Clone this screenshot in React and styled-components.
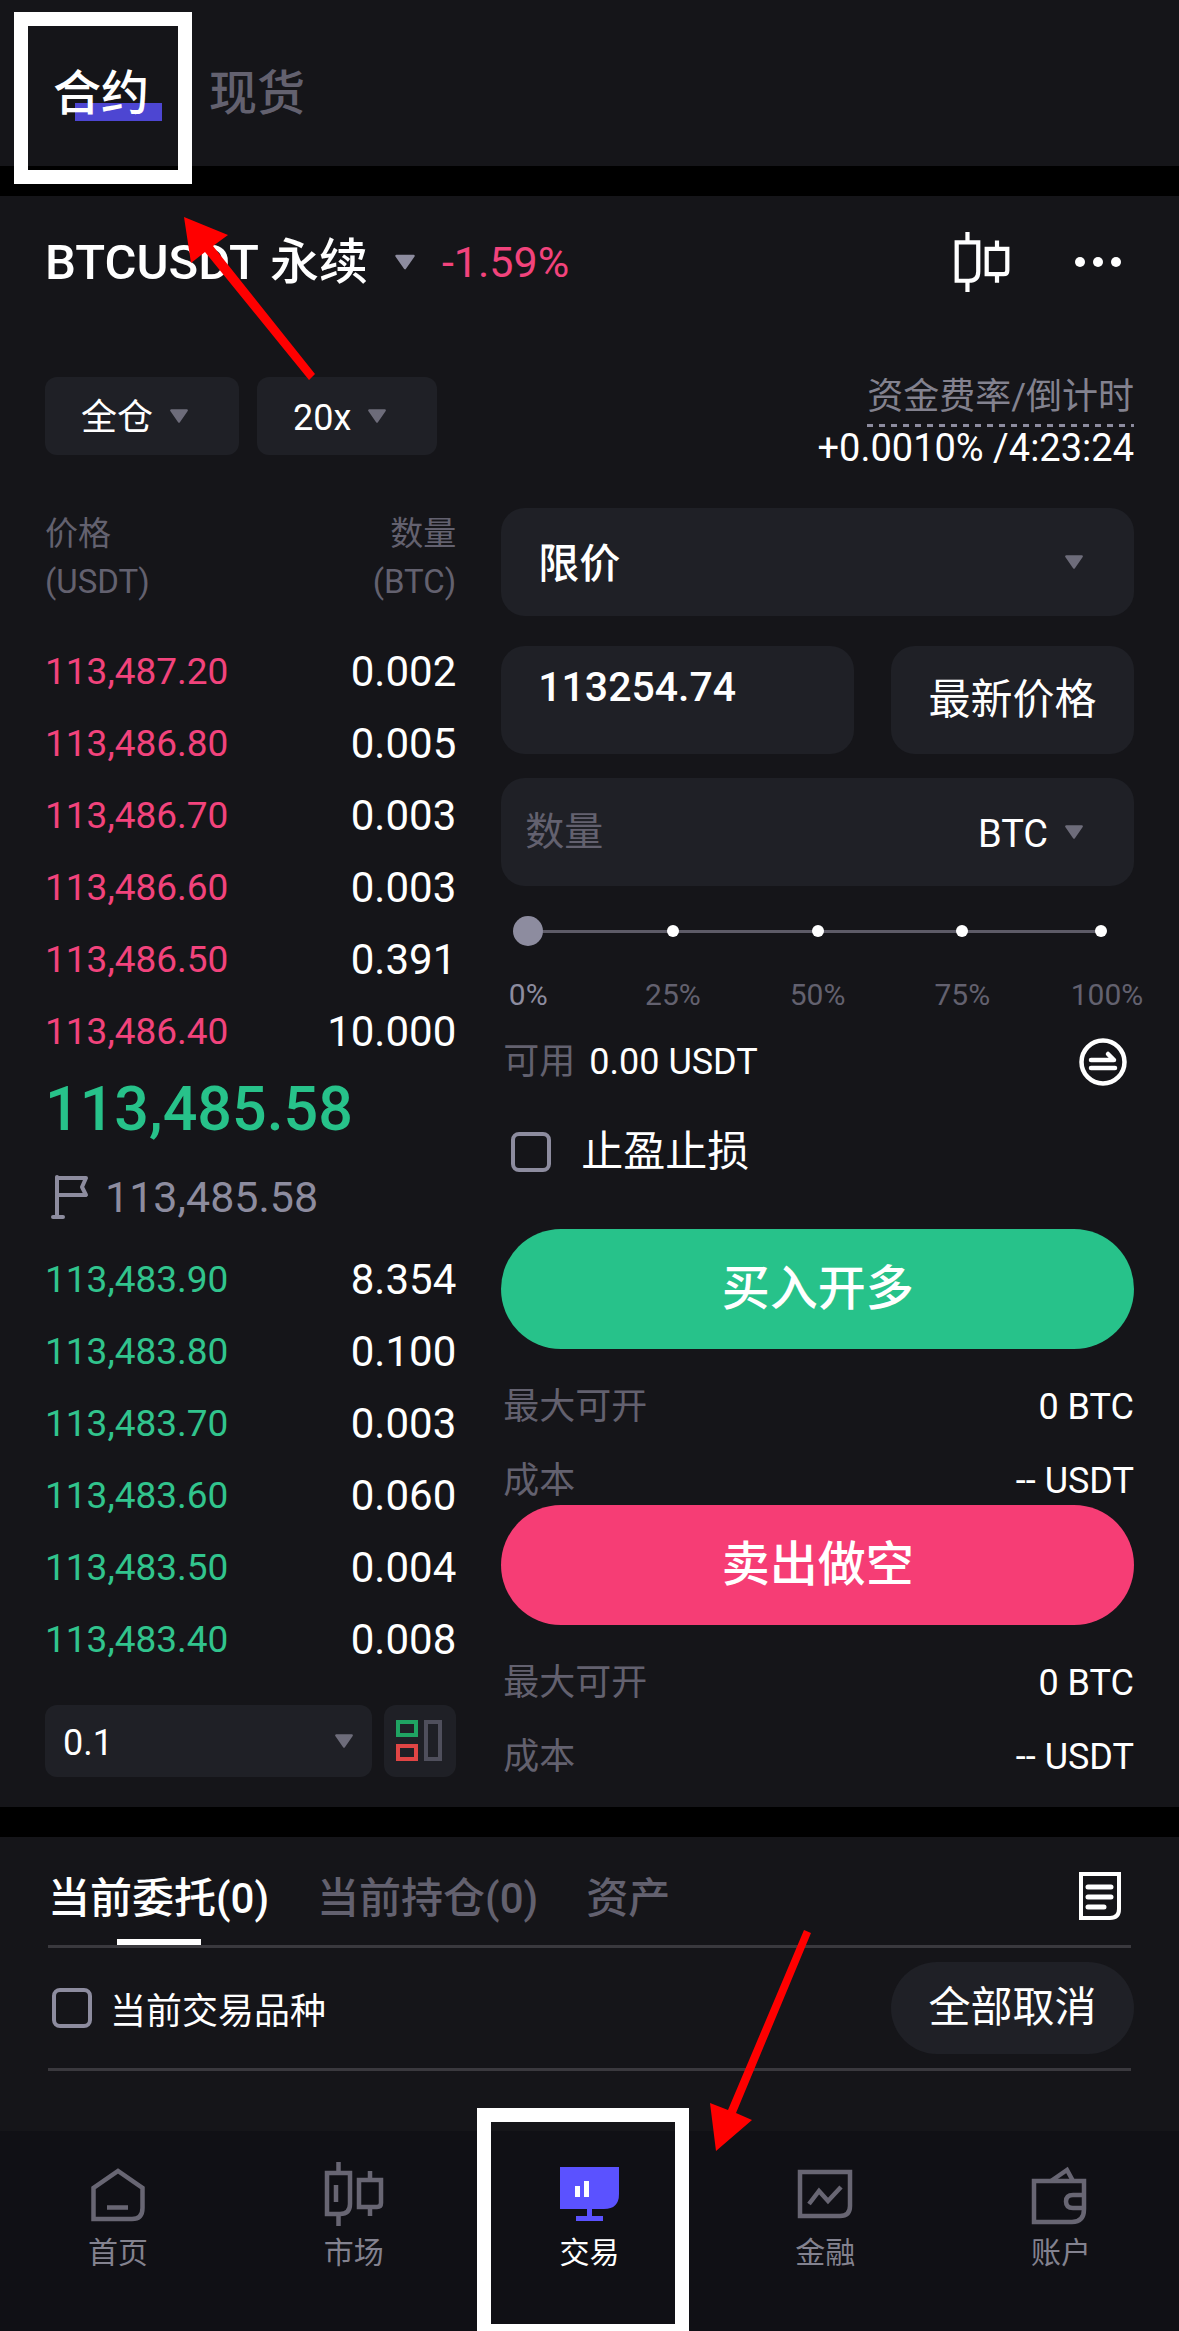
import { useState } from "react";
import styled, { createGlobalStyle } from "styled-components";

const asks = [
    ["113,487.20", "0.002"],
    ["113,486.80", "0.005"],
    ["113,486.70", "0.003"],
    ["113,486.60", "0.003"],
    ["113,486.50", "0.391"],
    ["113,486.40", "10.000"],
];

const bids = [
    ["113,483.90", "8.354"],
    ["113,483.80", "0.100"],
    ["113,483.70", "0.003"],
    ["113,483.60", "0.060"],
    ["113,483.50", "0.004"],
    ["113,483.40", "0.008"],
];

const marks = ["0%", "25%", "50%", "75%", "100%"];

const navItems = [
    { label: "首页", Icon: HomeIcon },
    { label: "市场", Icon: MarketIcon },
    { label: "交易", Icon: TradeIcon, active: true },
    { label: "金融", Icon: FinanceIcon },
    { label: "账户", Icon: WalletIcon },
];

export default function App() {
    const [price, setPrice] = useState("113254.74");
    const [amount, setAmount] = useState("");
    const [percent, setPercent] = useState(0);

    return (
        <Page>
            <GlobalStyle />

            <TopTabs>
                <TopTab type="button" $active><span>合约</span></TopTab>
                <TopTab type="button"><span>现货</span></TopTab>
            </TopTabs>

            <Trade>
                <PairRow>
                    <Pair type="button">
                        BTCUSDT 永续
                        <Caret $size={22} $color="#8d8c9f" />
                    </Pair>
                    <Change>-1.59%</Change>
                    <PairActions>
                        <IconButton type="button" aria-label="K线"><Candles size={60} /></IconButton>
                        <IconButton type="button" aria-label="更多">
                            <svg width="48" height="48" viewBox="0 0 48 48" fill="#fff">
                                <circle cx="6" cy="24" r="5" />
                                <circle cx="24" cy="24" r="5" />
                                <circle cx="42" cy="24" r="5" />
                            </svg>
                        </IconButton>
                    </PairActions>
                </PairRow>

                <SettingsRow>
                    <Dropdown label="保证金模式" value="全仓" />
                    <Dropdown label="杠杆" value="20x" />
                    <Funding>
                        <FundingLabel>资金费率/倒计时</FundingLabel>
                        <FundingValue>+0.0010% /4:23:24</FundingValue>
                    </Funding>
                </SettingsRow>

                <Columns>
                    <Book>
                        <BookTable>
                            <thead>
                                <tr>
                                    <th>价格<br />(USDT)</th>
                                    <th>数量<br />(BTC)</th>
                                </tr>
                            </thead>
                            <BookRows rows={asks} color="#f2437c" />
                        </BookTable>
                        <LastPrice>113,485.58</LastPrice>
                        <MarkPrice>
                            <FlagIcon />
                            113,485.58
                        </MarkPrice>
                        <BookTable>
                            <BookRows rows={bids} color="#31c48d" />
                        </BookTable>
                        <BookFooter>
                            <StepBox>
                                <Select aria-label="价格精度"><option>0.1</option></Select>
                                <Caret $size={20} $color="#6d6c7a" />
                            </StepBox>
                            <DepthButton type="button" aria-label="盘口布局"><DepthIcon /></DepthButton>
                        </BookFooter>
                    </Book>

                    <Form>
                        <FieldBox>
                            <Select aria-label="委托类型" $size={41} $weight={500}><option>限价</option></Select>
                            <Caret $size={20} $color="#6d6c7a" />
                        </FieldBox>
                        <PriceRow>
                            <PriceInput aria-label="价格" value={price} onChange={(e) => setPrice(e.target.value)} />
                            <LatestButton type="button">最新价格</LatestButton>
                        </PriceRow>
                        <AmountBox>
                            <AmountInput aria-label="数量" placeholder="数量" value={amount} onChange={(e) => setAmount(e.target.value)} />
                            <UnitSelect aria-label="单位"><option>BTC</option></UnitSelect>
                            <Caret $size={20} $color="#6d6c7a" />
                        </AmountBox>

                        <SliderBox>
                            <Slider
                                type="range"
                                aria-label="仓位比例"
                                min="0"
                                max="100"
                                value={percent}
                                onChange={(e) => setPercent(Number(e.target.value))}
                            />
                            <Ticks>
                                {marks.slice(1).map((mark) => <Tick key={mark} />)}
                            </Ticks>
                        </SliderBox>
                        <Marks>
                            {marks.map((mark, i) => <Mark key={mark} $active={i === 0}>{mark}</Mark>)}
                        </Marks>

                        <Available>
                            <Muted>可用</Muted>
                            <span>0.00 USDT</span>
                            <IconButton type="button" aria-label="划转"><TransferIcon /></IconButton>
                        </Available>

                        <StopRow>
                            <Checkbox type="checkbox" />
                            止盈止损
                        </StopRow>

                        <OrderButton type="button" $color="#27c28a">买入开多</OrderButton>
                        <OrderInfo />
                        <OrderButton type="button" $color="#f63d75">卖出做空</OrderButton>
                        <OrderInfo />
                    </Form>
                </Columns>
            </Trade>

            <Orders>
                <OrderTabs>
                    <OrderTab type="button" $active>当前委托(0)</OrderTab>
                    <OrderTab type="button">当前持仓(0)</OrderTab>
                    <OrderTab type="button">资产</OrderTab>
                    <HistoryButton type="button" aria-label="历史委托"><NoteIcon /></HistoryButton>
                </OrderTabs>
                <FilterRow>
                    <FilterLabel>
                        <Checkbox type="checkbox" />
                        当前交易品种
                    </FilterLabel>
                    <CancelAll type="button">全部取消</CancelAll>
                </FilterRow>
            </Orders>

            <Nav>
                {navItems.map(({ label, Icon, active }) => (
                    <NavItem key={label} href="#" $active={active}>
                        <Icon />
                        {label}
                        {active && <NavFrame />}
                    </NavItem>
                ))}
            </Nav>

            <TabFrame />
            <UpArrow width="140" height="170" viewBox="0 0 140 170">
                <path d="M4 4L48 22L33 33L135 161L129 167L25 39L11 50Z" fill="#f00" />
            </UpArrow>
            <DownArrow width="112" height="226" viewBox="0 0 112 226">
                <path d="M100 1L107 4L32 184L48 191L12 222L6 174L24 181Z" fill="#f00" />
            </DownArrow>
        </Page>
    )
}

function Dropdown({ label, value }) {
    return (
        <DropdownBox>
            <Select aria-label={label}><option>{value}</option></Select>
            <Caret $size={20} $color="#6d6c7a" />
        </DropdownBox>
    )
}

function BookRows({ rows, color }) {
    return (
        <tbody>
            {rows.map(([price, size]) => (
                <tr key={price}>
                    <PriceCell $color={color}>{price}</PriceCell>
                    <SizeCell>{size}</SizeCell>
                </tr>
            ))}
        </tbody>
    )
}

function OrderInfo() {
    return (
        <InfoList>
            <InfoRow><Muted>最大可开</Muted><span>0 BTC</span></InfoRow>
            <InfoRow><Muted>成本</Muted><span>-- USDT</span></InfoRow>
        </InfoList>
    )
}

function Caret({ $size, $color }) {
    return (
        <CaretSvg width={$size} height={$size} viewBox="0 0 18 18">
            <path d="M2 4H16L9 14Z" fill={$color} stroke={$color} strokeWidth="2" strokeLinejoin="round" />
        </CaretSvg>
    )
}

function Candles({ size, color = "#fff", inner }) {
    return (
        <svg width={size} height={size} viewBox="0 0 64 64" fill="none" stroke={color} strokeWidth="4.500">
            <path d="M5 11H28V42Q28 52 18 52H5Z" />
            <path d="M16.500 0V10M16.500 52V64" />
            <path d="M37 18H59V41Q59 45 55 45H37Z" />
            <path d="M48 9V17M48 46V54" />
            {inner && <path d="M14 23V40" />}
        </svg>
    )
}

function MarketIcon() {
    return <Candles size={64} color="#686673" inner />
}

function HomeIcon() {
    return (
        <svg width="64" height="64" viewBox="0 0 64 64" fill="none" stroke="#686673" strokeWidth="4.500">
            <path d="M7.500 57V26L32 9L56.500 26V46Q56.500 57 46 57Z" />
            <path d="M21 45.500H42" />
        </svg>
    )
}

function TradeIcon() {
    return (
        <svg width="64" height="64" viewBox="0 0 64 64" fill="#5b52ff">
            <path d="M3 5H62V32Q62 47 47 47H3Z" />
            <path d="M30 46H35V54H46V59H19V54H30Z" />
            <path d="M18 24H23V35H18ZM27 19H32V35H27Z" fill="#fff" />
        </svg>
    )
}

function FinanceIcon() {
    return (
        <svg width="64" height="64" viewBox="0 0 64 64" fill="none" stroke="#686673" strokeWidth="4.500">
            <path d="M7 10H57V44Q57 54 47 54H7Z" />
            <path d="M16 42L26 29L35 39L48 25" />
        </svg>
    )
}

function WalletIcon() {
    return (
        <svg width="64" height="64" viewBox="0 0 64 64" fill="none" stroke="#686673" strokeWidth="4.500">
            <path d="M5 19H55V47Q55 60 43 60H5Z" />
            <path d="M22 19L38 8L44 19" />
            <path d="M55 33H44Q37 33 37 39.500Q37 46 44 46H55" />
        </svg>
    )
}

function FlagIcon() {
    return (
        <svg width="40" height="48" viewBox="0 0 40 48" fill="none" stroke="#8d8c9f" strokeWidth="4" strokeLinecap="round" strokeLinejoin="round">
            <path d="M8 4V44M4 44H14" />
            <path d="M8 5H37L33 14L37 22H8" />
        </svg>
    )
}

function TransferIcon() {
    return (
        <svg width="48" height="48" viewBox="0 0 48 48" fill="none" stroke="#fff" strokeWidth="4.500" strokeLinecap="round" strokeLinejoin="round">
            <circle cx="24" cy="24" r="21.500" />
            <path d="M12 22H35L29 16" />
            <path d="M12 30H36" />
        </svg>
    )
}

function NoteIcon() {
    return (
        <svg width="42" height="48" viewBox="0 0 42 48" fill="none" stroke="#fff" strokeWidth="4">
            <path d="M2 2H40V37Q40 46 31 46H2Z" />
            <path d="M9 15H32M9 25H32M9 35H25" strokeWidth="5" strokeLinecap="round" />
        </svg>
    )
}

function DepthIcon() {
    return (
        <svg width="48" height="48" viewBox="0 0 48 48" fill="none" strokeWidth="4">
            <rect x="2" y="5" width="18" height="13" stroke="#1fa362" />
            <rect x="2" y="29" width="18" height="13" stroke="#e04545" />
            <rect x="30" y="5" width="14" height="37" stroke="#4f4f5c" />
        </svg>
    )
}

const GlobalStyle = createGlobalStyle`
    * {
        box-sizing: border-box;
    }

    body {
        margin: 0;
        background: #000;
    }

    body, button, input, select {
        font-family: Roboto, "Noto Sans CJK SC", sans-serif;
    }

    button, input, select {
        margin: 0;
        padding: 0;
        border: 0;
        outline: 0;
        background: none;
        color: inherit;
        font-size: inherit;
    }

    button {
        line-height: 1;
    }
`

const Page = styled.div`
    position: relative;
    display: flex;
    flex-direction: column;
    overflow: hidden;
    color: #fff;
    font-size: 36px;
`

const TopTabs = styled.div`
    display: flex;
    gap: 60px;
    padding: 58px 53px 36px;
    background: #151519;
`

const TopTab = styled.button`
    position: relative;
    color: ${(props) => (props.$active ? '#fff' : '#63616f')};
    font-size: 48px;
    font-weight: 500;
    line-height: 72px;

    span {
        position: relative;
    }

    &::before {
        content: "";
        display: ${(props) => (props.$active ? 'block' : 'none')};
        position: absolute;
        left: 22px;
        right: -13px;
        bottom: 9px;
        height: 18px;
        background: #4d46d2;
    }
`

const Trade = styled.main`
    margin-top: 30px;
    padding: 30px 45px 26px;
    background: #151519;
`

const PairRow = styled.div`
    display: flex;
    align-items: center;
    height: 72px;
`

const Pair = styled.button`
    display: flex;
    align-items: center;
    gap: 26px;
    font-size: 49px;
    font-weight: 500;
`

const Change = styled.span`
    margin-left: 26px;
    color: #f2437c;
    font-size: 43px;
`

const PairActions = styled.div`
    display: flex;
    align-items: center;
    gap: 62px;
    margin-left: auto;
    padding-right: 12px;
`

const IconButton = styled.button`
    display: flex;
    align-items: center;
`

const CaretSvg = styled.svg`
    flex: none;
    pointer-events: none;
`

const SettingsRow = styled.div`
    display: flex;
    align-items: center;
    gap: 18px;
    margin-top: 64px;
`

const DropdownBox = styled.div`
    display: flex;
    align-items: center;
    gap: 15px;
    height: 78px;
    padding: 0 50px 0 36px;
    border-radius: 12px;
    background: #1f2026;
`

const Select = styled.select`
    flex: 1;
    padding-top: 3px;
    appearance: none;
    font-size: ${(props) => props.$size || 36}px;
    font-weight: ${(props) => props.$weight || 400};
`

const Funding = styled.div`
    display: flex;
    flex-direction: column;
    align-items: flex-end;
    margin-left: auto;
    padding-top: 6px;
`

const FundingLabel = styled.span`
    padding-bottom: 1px;
    background: repeating-linear-gradient(90deg, #8d8c9f 0 6px, transparent 6px 12px) bottom / 100% 3px no-repeat;
    color: #83828f;
    line-height: 58px;
`

const FundingValue = styled.span`
    font-size: 38px;
    line-height: 43px;
`

const Columns = styled.div`
    display: grid;
    grid-template-columns: minmax(0, 13fr) minmax(0, 20fr);
    gap: 45px;
    margin-top: 38px;
`

const Book = styled.div`
    padding-top: 2px;
`

const BookTable = styled.table`
    width: 100%;
    border-collapse: collapse;

    th {
        padding: 0 0 30px;
        color: #63616f;
        font-size: 33px;
        font-weight: 400;
        line-height: 48px;
        text-align: left;
    }

    th:last-child {
        text-align: right;
    }
`

const PriceCell = styled.td`
    padding: 0;
    color: ${(props) => props.$color};
    font-size: 37px;
    line-height: 72px;
`

const SizeCell = styled.td`
    padding: 0;
    font-size: 42px;
    line-height: 72px;
    text-align: right;
`

const LastPrice = styled.div`
    color: #27c28a;
    font-size: 61px;
    font-weight: 500;
    line-height: 82px;
`

const MarkPrice = styled.div`
    display: flex;
    align-items: center;
    gap: 16px;
    height: 94px;
    padding-left: 4px;
    color: #8d8c9f;
    font-size: 43px;
`

const BookFooter = styled.div`
    display: flex;
    gap: 12px;
    margin-top: 29px;
`

const StepBox = styled.div`
    display: flex;
    flex: 1;
    align-items: center;
    height: 72px;
    padding: 0 18px;
    border-radius: 12px;
    background: #1f2026;
`

const DepthButton = styled.button`
    display: flex;
    align-items: center;
    justify-content: center;
    width: 72px;
    border-radius: 12px;
    background: #1f2026;
`

const Form = styled.form`
    display: flex;
    flex-direction: column;
`

const FieldBox = styled.div`
    display: flex;
    align-items: center;
    height: 108px;
    padding: 0 50px 0 37px;
    border-radius: 24px;
    background: #1f2026;
`

const PriceRow = styled.div`
    display: grid;
    grid-template-columns: minmax(0, 1fr) 243px;
    gap: 37px;
    margin-top: 30px;
`

const PriceInput = styled.input`
    min-width: 0;
    height: 108px;
    padding: 0 24px 26px 37px;
    border-radius: 24px;
    background: #1f2026;
    font-size: 41px;
    font-weight: 500;
`

const LatestButton = styled.button`
    border-radius: 24px;
    background: #1f2026;
    font-size: 42px;
`

const AmountBox = styled(FieldBox)`
    gap: 15px;
    margin-top: 24px;
    padding-left: 24px;
`

const AmountInput = styled.input`
    flex: 1;
    min-width: 0;
    font-size: 39px;

    &::placeholder {
        color: #63616f;
    }
`

const UnitSelect = styled(Select)`
    flex: none;
    font-size: 38px;
`

const SliderBox = styled.div`
    position: relative;
    height: 42px;
    margin: 24px 27px 0 12px;
`

const Slider = styled.input`
    display: block;
    width: 100%;
    height: 42px;
    appearance: none;
    background: linear-gradient(#5d5b67, #5d5b67) center / calc(100% - 12px) 3px no-repeat;

    &::-webkit-slider-thumb {
        width: 30px;
        height: 30px;
        appearance: none;
        border-radius: 50%;
        background: #8d8c9f;
    }
`

const Ticks = styled.div`
    position: absolute;
    inset: 0 0 0 15px;
    display: grid;
    grid-template-columns: repeat(4, 1fr);
    align-items: center;
    pointer-events: none;
`

const Tick = styled.span`
    justify-self: end;
    width: 12px;
    height: 12px;
    margin-right: -6px;
    border-radius: 50%;
    background: #fff;

    &:last-child {
        margin-right: 0;
    }
`

const Marks = styled.div`
    display: flex;
    justify-content: space-between;
    margin: 21px -13px 0;
`

const Mark = styled.span`
    width: 80px;
    color: ${(props) => (props.$active ? '#8d8c9f' : '#63616f')};
    font-size: 30px;
    line-height: 44px;
    text-align: center;
`

const Available = styled.div`
    display: flex;
    align-items: center;
    gap: 14px;
    margin-top: 21px;
    padding-left: 2px;
    line-height: 48px;

    button {
        margin-left: auto;
        padding-right: 7px;
    }
`

const Muted = styled.span`
    color: #63616f;
`

const StopRow = styled.label`
    display: flex;
    align-items: center;
    gap: 30px;
    margin: 40px 0 51px;
    padding-left: 10px;
    font-size: 42px;
    line-height: 52px;
`

const Checkbox = styled.input`
    width: 40px;
    height: 40px;
    appearance: none;
    border: 4px solid #8d8c9f;
    border-radius: 8px;

    &:checked {
        background: #5b52ff;
    }
`

const OrderButton = styled.button`
    height: 120px;
    border-radius: 60px;
    background: ${(props) => props.$color};
    font-size: 48px;
    font-weight: 500;
`

const InfoList = styled.div`
    display: flex;
    flex-direction: column;
    gap: 26px;
    padding-top: 34px;
`

const InfoRow = styled.div`
    display: flex;
    justify-content: space-between;
    padding-left: 2px;
    line-height: 48px;
`

const Orders = styled.section`
    margin-top: 30px;
    padding: 0 48px 60px;
    background: #151519;
`

const OrderTabs = styled.div`
    display: flex;
    gap: 48px;
    border-bottom: 3px solid #3a393e;
`

const OrderTab = styled.button`
    position: relative;
    height: 108px;
    padding-top: 16px;
    color: ${(props) => (props.$active ? '#fff' : '#63616f')};
    font-size: 42px;
    font-weight: 500;
    white-space: nowrap;

    &::after {
        content: "";
        display: ${(props) => (props.$active ? 'block' : 'none')};
        position: absolute;
        left: calc(50% - 42px);
        bottom: 0;
        width: 84px;
        height: 6px;
        background: #fff;
    }
`

const HistoryButton = styled(IconButton)`
    margin-left: auto;
    padding: 10px 10px 0 0;
`

const FilterRow = styled.div`
    display: flex;
    align-items: center;
    justify-content: space-between;
    padding: 14px 0;
    border-bottom: 3px solid #3a393e;
`

const FilterLabel = styled.label`
    display: flex;
    align-items: center;
    gap: 18px;
    padding-left: 4px;
`

const CancelAll = styled.button`
    width: 243px;
    height: 92px;
    margin-right: -3px;
    border-radius: 46px;
    background: #1f2026;
    font-size: 42px;
`

const Nav = styled.nav`
    display: grid;
    grid-template-columns: repeat(5, 1fr);
    background: #101015;
`

const NavItem = styled.a`
    position: relative;
    display: flex;
    flex-direction: column;
    align-items: center;
    padding: 31px 0 51px;
    color: ${(props) => (props.$active ? '#fff' : '#83828f')};
    font-size: 30px;
    line-height: 54px;
    text-decoration: none;
`

// highlight frames and arrows lie over the page
const Frame = styled.div`
    position: absolute;
    border: 14px solid #fff;
    pointer-events: none;
`

const TabFrame = styled(Frame)`
    top: 12px;
    left: 14px;
    width: 178px;
    height: 172px;
`

const NavFrame = styled(Frame)`
    top: -23px;
    bottom: 0;
    left: calc(50% - 112px);
    width: 212px;
    border-bottom-width: 7px;
`

const UpArrow = styled.svg`
    position: absolute;
    top: 213px;
    left: 180px;
    pointer-events: none;
`

const DownArrow = styled.svg`
    position: absolute;
    bottom: 176px;
    left: calc(60% - 3px);
    pointer-events: none;
`
